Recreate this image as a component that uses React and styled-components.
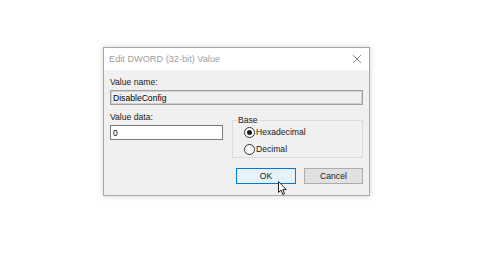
import styled, { createGlobalStyle } from 'styled-components'

const GlobalStyle = createGlobalStyle`
  html, body {
    margin: 0;
    padding: 0;
    background: #ffffff;
  }
  body {
    width: 480px;
    height: 254px;
    overflow: hidden;
    font-family: 'Liberation Sans', Arial, sans-serif;
  }
`

const Page = styled.div`
  width: 480px;
  height: 254px;
  padding: 47px 0 0 103px;
  box-sizing: border-box;
`

const Dialog = styled.div`
  position: relative;
  width: 267px;
  height: 149px;
  box-sizing: border-box;
  border: 1px solid #a8a8a8;
  box-shadow: 0 0 6px rgba(0, 0, 0, 0.18);
  background: #f0f0f0;
  display: flex;
  flex-direction: column;
`

const TitleBar = styled.div`
  height: 22px;
  background: #ffffff;
  display: flex;
  align-items: center;
  justify-content: space-between;
  padding: 0 7px 0 5px;
`

const Title = styled.span`
  font-size: 9.2px;
  color: #a0a0a0;
`

const Body = styled.div`
  flex: 1;
  padding: 6px 6px 0 6px;
  display: flex;
  flex-direction: column;
`

const Label = styled.div`
  font-size: 8.6px;
  color: #1a1a1a;
  height: 12px;
  line-height: 12px;
`

const TextBox = styled.div`
  height: 15px;
  box-sizing: border-box;
  width: ${p => p.$width};
  border: 1px solid ${p => (p.$readOnly ? '#a0a0a0' : '#7a7a7a')};
  box-shadow: ${p => (p.$readOnly ? 'inset 0 0 0 1px #d0d0d0' : 'none')};
  background: ${p => (p.$readOnly ? '#f0f0f0' : '#ffffff')};
  font-size: 8.6px;
  color: #000;
  padding-left: 2px;
  display: flex;
  align-items: center;
  margin-top: 2px;
`

const Row = styled.div`
  display: flex;
  gap: 9px;
  margin-top: 6px;
`

const Column = styled.div`
  display: flex;
  flex-direction: column;
`

const GroupBox = styled.fieldset`
  margin: 0;
  margin-top: 4px;
  width: 131px;
  height: 43px;
  box-sizing: border-box;
  border: 1px solid #dcdcdc;
  padding: 1px 0 0 11px;
  display: flex;
  flex-direction: column;
  gap: 5px;
`

const Legend = styled.legend`
  font-size: 8.6px;
  color: #1a1a1a;
  padding: 0 1px;
  margin-left: -7px;
`

const RadioRow = styled.div`
  display: flex;
  align-items: center;
  gap: 1px;
  font-size: 8.6px;
  color: #1a1a1a;
  height: 12px;
`

const RadioCircle = styled.span`
  width: 11px;
  height: 11px;
  box-sizing: border-box;
  border-radius: 50%;
  border: 1px solid #333;
  background: #fff;
  display: flex;
  align-items: center;
  justify-content: center;
  &::after {
    content: '';
    width: 5px;
    height: 5px;
    border-radius: 50%;
    background: ${p => (p.$checked ? '#1a1a1a' : 'transparent')};
  }
`

const ButtonRow = styled.div`
  display: flex;
  justify-content: flex-end;
  gap: 8px;
  margin-top: 10px;
`

const Button = styled.div`
  width: ${p => (p.$primary ? '60px' : '59px')};
  height: 16px;
  box-sizing: border-box;
  border: 1px solid ${p => (p.$primary ? '#0078d7' : '#adadad')};
  background: ${p => (p.$primary ? '#e5f1fb' : '#e1e1e1')};
  font-size: 8.6px;
  color: #1a1a1a;
  display: flex;
  align-items: center;
  justify-content: center;
`

const Cursor = styled.svg`
  position: absolute;
  left: 174px;
  top: 133px;
`

const CloseIcon = () => (
  <svg width="10" height="10" viewBox="0 0 10 10">
    <path d="M1 1 L9 9 M9 1 L1 9" stroke="#8a8a8a" strokeWidth="1" fill="none" />
  </svg>
)

export default function App() {
  return (
    <>
      <GlobalStyle />
      <Page>
        <Dialog>
          <TitleBar>
            <Title>Edit DWORD (32-bit) Value</Title>
            <CloseIcon />
          </TitleBar>
          <Body>
            <Label>Value name:</Label>
            <TextBox $readOnly $width="253px">DisableConfig</TextBox>
            <Row>
              <Column>
                <Label>Value data:</Label>
                <TextBox $width="113px">0</TextBox>
              </Column>
              <GroupBox>
                <Legend>Base</Legend>
                <RadioRow>
                  <RadioCircle $checked />
                  Hexadecimal
                </RadioRow>
                <RadioRow>
                  <RadioCircle />
                  Decimal
                </RadioRow>
              </GroupBox>
            </Row>
            <ButtonRow>
              <Button $primary>OK</Button>
              <Button>Cancel</Button>
            </ButtonRow>
          </Body>
          <Cursor width="10" height="15" viewBox="0 0 10 15">
            <path
              d="M0.5 0.5 L0.5 11.5 L3 9 L4.8 13.5 L6.5 12.8 L4.8 8.6 L8.2 8.6 Z"
              fill="#ffffff"
              stroke="#222"
              strokeWidth="1"
              strokeLinejoin="miter"
            />
          </Cursor>
        </Dialog>
      </Page>
    </>
  )
}
